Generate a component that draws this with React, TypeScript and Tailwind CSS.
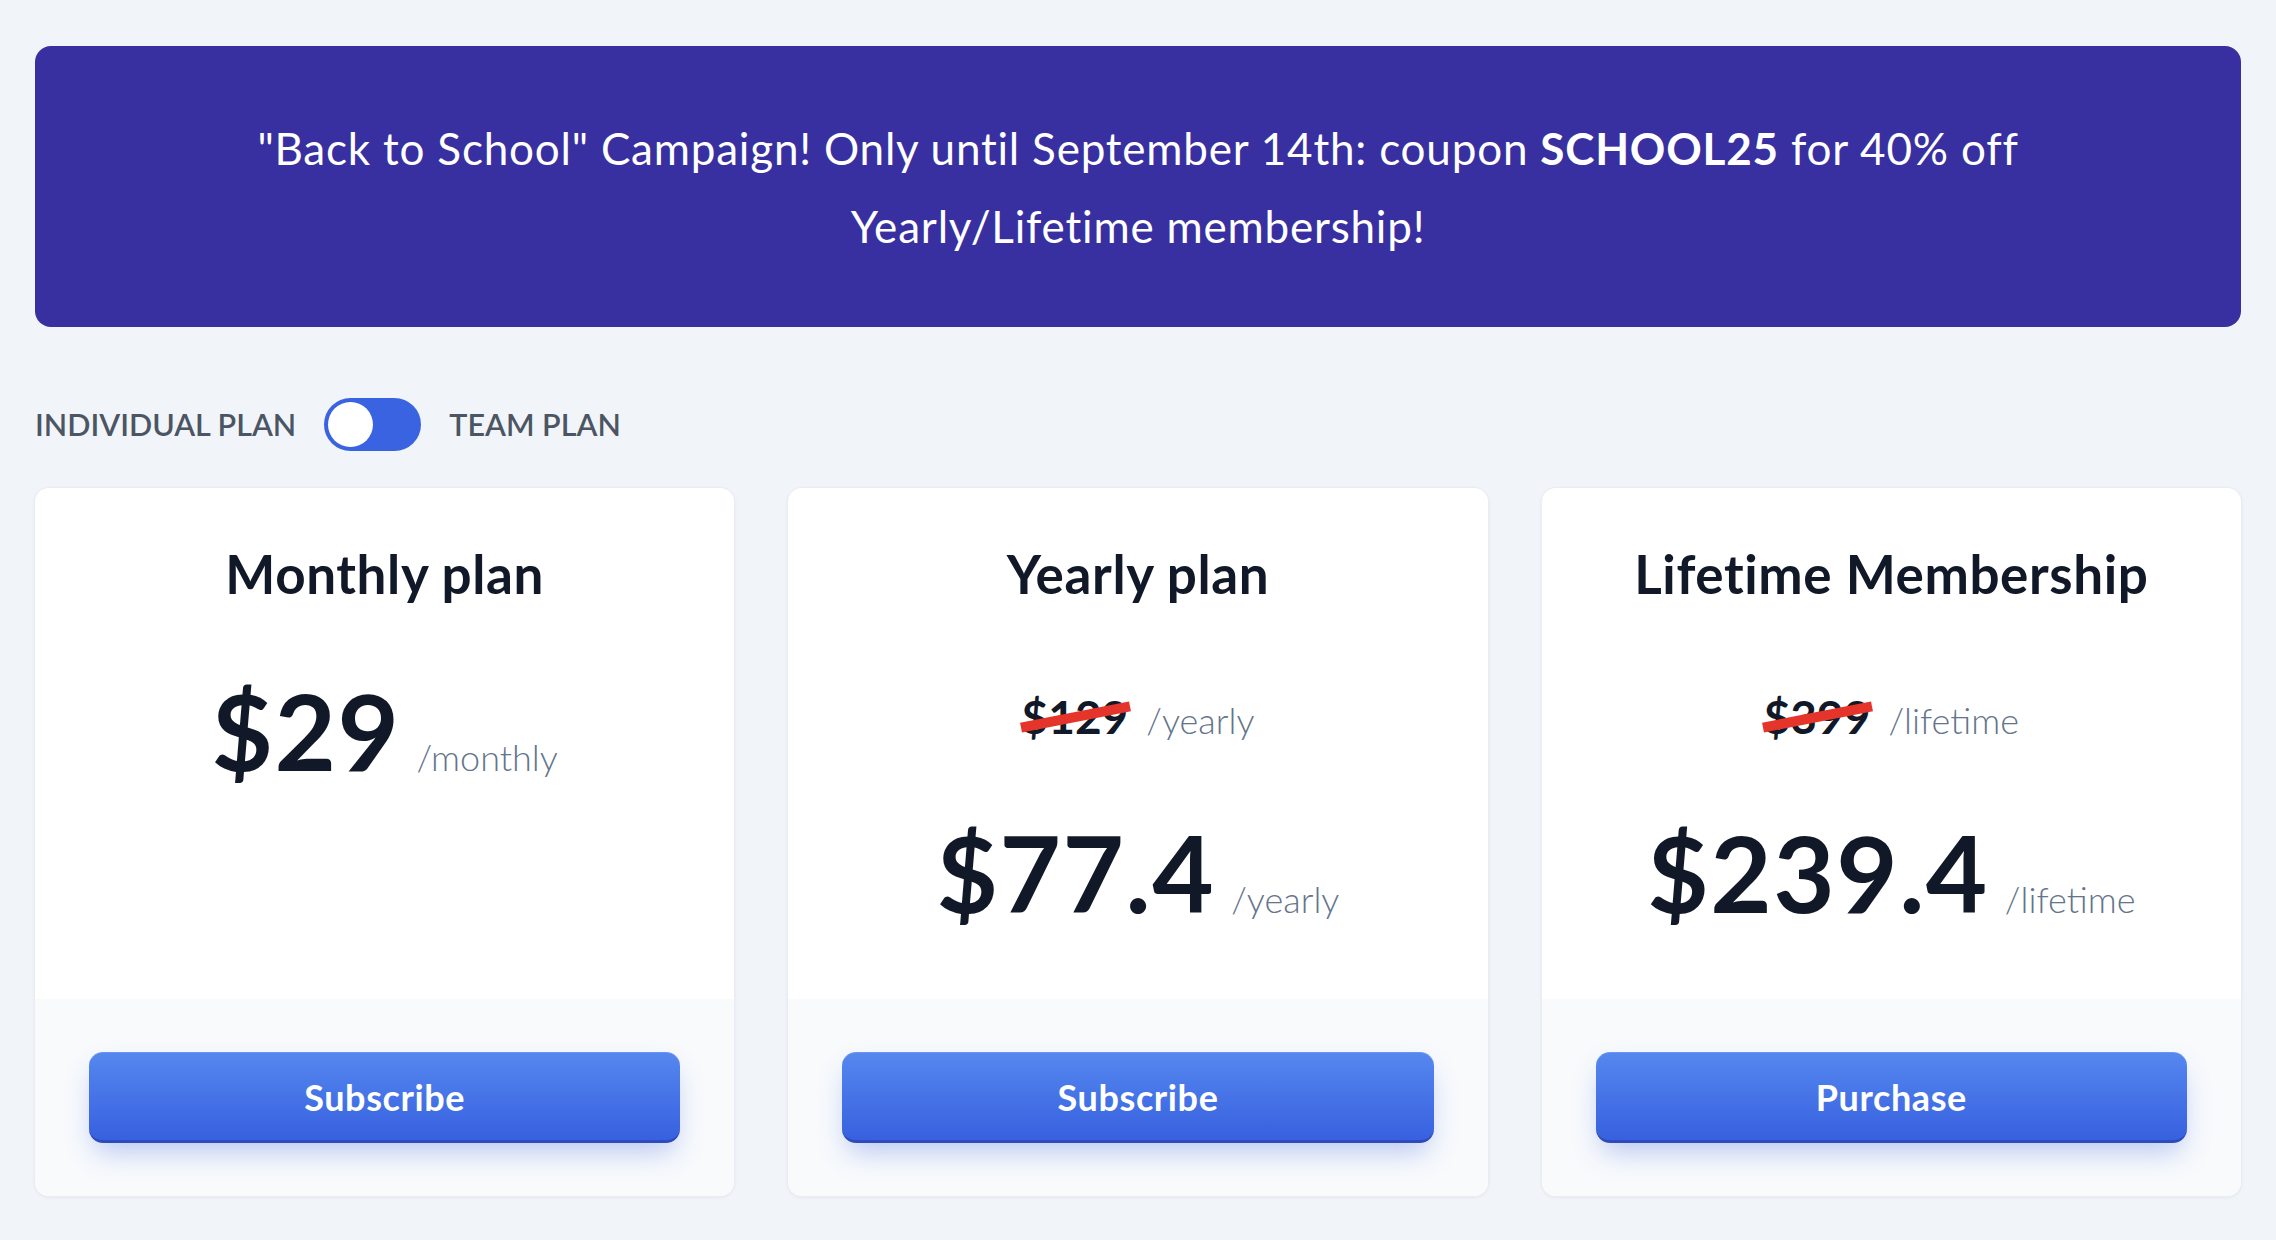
import React from "react";

function Strike({ children }: { children: React.ReactNode }) {
  return (
    <span className="relative inline-block">
      <span>{children}</span>
      <span className="absolute left-[-2px] right-[-2px] top-1/2 h-[10px] -translate-y-1/2 -rotate-[11deg] bg-[#e5352a]" />
    </span>
  );
}

function PriceRow({ price, unit }: { price: string; unit: string }) {
  return (
    <div className="flex items-baseline justify-center gap-[16px]">
      <span className="text-[106px] font-bold leading-none tracking-[1.5px] text-[#111827]">{price}</span>
      <span className="text-[36px] font-light leading-none text-[#64748b]">{unit}</span>
    </div>
  );
}

function OldRow({ price, unit }: { price: string; unit: string }) {
  return (
    <div className="flex items-baseline justify-center gap-[18px]">
      <span className="text-[46px] font-bold leading-none text-[#111827]">
        <Strike>{price}</Strike>
      </span>
      <span className="text-[36px] font-light leading-none text-[#64748b]">{unit}</span>
    </div>
  );
}

function Card({
  title,
  old,
  price,
  unit,
  button,
}: {
  title: string;
  old?: string;
  price: string;
  unit: string;
  button: string;
}) {
  return (
    <div className="flex flex-col overflow-hidden rounded-[14px] bg-white shadow-[0_1px_4px_rgba(15,23,42,0.08)] ring-1 ring-[#e9edf3]">
      <div className="flex h-[511px] flex-col items-center pt-[56px]">
        <h2 className="text-[53px] font-bold leading-[60px] tracking-[0.6px] text-[#111827]">{title}</h2>
        {old ? (
          <>
            <div className="mt-[90px]">
              <OldRow price={old} unit={unit} />
            </div>
            <div className="mt-[79px]">
              <PriceRow price={price} unit={unit} />
            </div>
          </>
        ) : (
          <div className="mt-[73px]">
            <PriceRow price={price} unit={unit} />
          </div>
        )}
      </div>
      <div className="flex-1 bg-[#f8fafc] px-[54px] py-[53px]">
        <button className="flex h-[91px] w-full items-center justify-center rounded-[14px] border-b-[3px] border-t border-b-[#2d4bba] border-t-[#6a95f2] bg-gradient-to-b from-[#5587ef] to-[#3860df] text-[36px] font-bold tracking-[0.6px] text-white shadow-[0_14px_28px_-6px_rgba(59,99,224,0.35)]">
          {button}
        </button>
      </div>
    </div>
  );
}

export default function App() {
  return (
    <div className="min-h-[1240px] bg-[#f1f5f9] px-[35px] pt-[46px] pb-[40px] font-['Lato','Noto_Sans',sans-serif]">
      <div className="flex h-[281px] items-center justify-center rounded-[16px] bg-[#3830a0] text-center text-[44px] leading-[78px] tracking-[0.8px] text-white">
        <p>
          "Back to School" Campaign! Only until September 14th: coupon <span className="font-bold">SCHOOL25</span> for 40% off
          <br />
          Yearly/Lifetime membership!
        </p>
      </div>

      <div className="mt-[71px] flex items-center gap-[28px]">
        <span className="text-[30.5px] font-semibold uppercase text-[#4b5563]">Individual plan</span>
        <div className="flex h-[53px] w-[97px] items-center rounded-full bg-[#3a63e1] p-[4px]">
          <div className="h-[45px] w-[45px] rounded-full bg-white" />
        </div>
        <span className="text-[30.5px] font-semibold uppercase text-[#4b5563]">Team plan</span>
      </div>

      <div className="mt-[37px] grid grid-cols-3 gap-[54px]">
        <Card title="Monthly plan" price="$29" unit="/monthly" button="Subscribe" />
        <Card title="Yearly plan" old="$129" price="$77.4" unit="/yearly" button="Subscribe" />
        <Card title="Lifetime Membership" old="$399" price="$239.4" unit="/lifetime" button="Purchase" />
      </div>
    </div>
  );
}
